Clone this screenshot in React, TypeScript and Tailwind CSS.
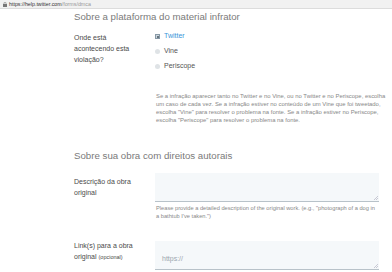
import React from "react";

const font = { fontFamily: '"Liberation Sans", Arial, sans-serif' };

function Radio({ label, checked }: { label: string; checked?: boolean }) {
  return (
    <div className="flex items-center h-[15px]">
      {checked ? (
        <span className="w-[5px] h-[5px] border border-[#8899a6] bg-[#ccd6dd] flex items-center justify-center">
          <span className="w-[2px] h-[2px] bg-[#66757f]" />
        </span>
      ) : (
        <span className="w-[5px] h-[5px] rounded-full bg-[#dfe3e6]" />
      )}
      <span className={`ml-[4px] text-[7px] ${checked ? "text-[#3b94d9]" : "text-[#555]"}`}>{label}</span>
    </div>
  );
}

function TextArea({ placeholder }: { placeholder?: string }) {
  return (
    <div className="relative w-[224px] h-[29px] bg-[#f5f8fa] border-b border-[#b8c2c9] px-[7px] pt-[3px]">
      <span className="text-[7px] text-[#9aa6ae]">{placeholder}</span>
      <svg className="absolute right-[1px] bottom-[1px]" width="4" height="4" viewBox="0 0 4 4">
        <path d="M0 4 L4 0 M2 4 L4 2" stroke="#aab" strokeWidth="0.6" />
      </svg>
    </div>
  );
}

export default function App() {
  return (
    <div className="w-[392px] h-[272px] bg-white overflow-hidden" style={font}>
      <div className="h-[9px] bg-[#f1f1f1] border-b border-[#dcdcdc] flex items-center pl-[3px]">
        <svg width="4" height="5" viewBox="0 0 4 5">
          <rect x="0" y="2" width="4" height="3" fill="#777" />
          <path d="M1 2 V1.2 A1 1 0 0 1 3 1.2 V2" stroke="#777" strokeWidth="0.6" fill="none" />
        </svg>
        <span className="ml-[2px] text-[5.3px] leading-[8px] text-[#333]">
          https://help.twitter.com<span className="text-[#999]">/forms/dmca</span>
        </span>
      </div>

      <div className="pl-[74px]">
        <h2 className="pt-[2px] text-[9.7px] leading-[12px] text-[#7a7a7a]">Sobre a plataforma do material infrator</h2>

        <div className="flex mt-[6px]">
          <div className="w-[81px] pt-[3px] text-[7px] leading-[11px] text-[#4a4a4a]">
            Onde está
            <br />
            acontecendo esta
            <br />
            violação?
          </div>
          <div className="w-[226px]">
            <Radio label="Twitter" checked />
            <Radio label="Vine" />
            <Radio label="Periscope" />
            <p className="mt-[18px] pl-[1px] whitespace-nowrap text-[5.9px] leading-[8px] text-[#888]">
              Se a infração aparecer tanto no Twitter e no Vine, ou no Twitter e no Periscope, escolha
              <br />
              um caso de cada vez. Se a infração estiver no conteúdo de um Vine que foi tweetado,
              <br />
              escolha "Vine" para resolver o problema na fonte. Se a infração estiver no Periscope,
              <br />
              escolha "Periscope" para resolver o problema na fonte.
            </p>
          </div>
        </div>

        <h2 className="mt-[26px] text-[9.7px] leading-[12px] text-[#7a7a7a]">Sobre sua obra com direitos autorais</h2>

        <div className="flex mt-[11px]">
          <div className="w-[81px] pt-[3px] text-[7px] leading-[11px] text-[#4a4a4a]">
            Descrição da obra
            <br />
            original
          </div>
          <div>
            <TextArea />
            <p className="mt-[2px] pl-[1px] whitespace-nowrap text-[5.7px] leading-[8px] text-[#888]">
              Please provide a detailed description of the original work. (e.g., "photograph of a dog in
              <br />
              a bathtub I've taken.")
            </p>
          </div>
        </div>

        <div className="flex mt-[21px]">
          <div className="w-[81px] -mt-[1px] text-[7px] leading-[11px] text-[#4a4a4a]">
            Link(s) para a obra
            <br />
            original <span className="text-[5.5px]">(opcional)</span>
          </div>
          <TextArea placeholder="https://" />
        </div>
      </div>
    </div>
  );
}
